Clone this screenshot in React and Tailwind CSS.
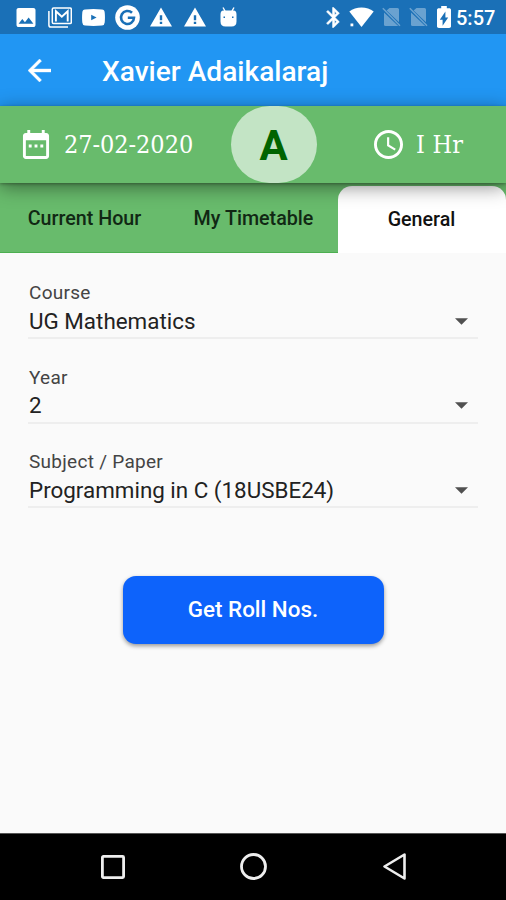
import React from 'react';

const tabs = ['Current Hour', 'My Timetable', 'General'];

const fields = [
  { label: 'Course', value: 'UG Mathematics' },
  { label: 'Year', value: '2' },
  { label: 'Subject / Paper', value: 'Programming in C (18USBE24)' },
];

const WarningIcon = ({ className }) => (
  <svg viewBox="1 2 22 19" fill="currentColor" className={className}>
    <path d="M1 21h22L12 2 1 21zm12.200-2.500h-2.400v-2.300h2.400v2.300zm0-3.800h-2.400v-5h2.400v5z" />
  </svg>
);

const NoSimIcon = ({ className }) => (
  <svg viewBox="0 0 19 20" fill="currentColor" className={className}>
    <path d="M7.500 1H15.500Q17 1 17 2.500V15.200L4.600 3.500Z" />
    <path d="M2 5.600 16.200 19H3.500Q2 19 2 17.500Z" />
    <path d="M.8 1.200 18 18.800" stroke="currentColor" strokeWidth="1.500" />
  </svg>
);

const StatusBar = () => (
  <div className="flex h-[34px] shrink-0 items-center justify-between bg-[#1a70b7] pl-4 pr-[11px] text-white">
    <div className="flex items-center">
      {/* Picture */}
      <svg viewBox="3 3 18 18" fill="currentColor" className="h-[19px] w-5">
        <path d="M21 19V5c0-1.100-.9-2-2-2H5c-1.100 0-2 .9-2 2v14c0 1.100.9 2 2 2h14c1.100 0 2-.9 2-2zM8.500 13.500l2.500 3.010L14.500 12l4.500 6H5l3.500-4.500z" />
      </svg>
      {/* Mail stack */}
      <svg viewBox="0 0 24 21" className="ml-3 h-[21px] w-6" fill="none" stroke="currentColor">
        <path d="M.9 4V18Q.9 20.100 3 20.100H20" strokeWidth="1.500" />
        <rect x="4.300" y="1" width="19" height="15.600" rx="1.300" strokeWidth="1.500" />
        <path d="M7.900 14.500V4.200L13.800 9.600L19.700 4.200V14.500" strokeWidth="1.900" />
      </svg>
      {/* Video */}
      <svg viewBox="0 0 23 17" fill="currentColor" className="ml-2.5 h-[17px] w-[23px]">
        <path fillRule="evenodd" d="M3 .5Q11.500-.3 20 .5Q22.500.7 22.700 3.500Q23.200 8.500 22.700 13.500Q22.500 16.300 20 16.500Q11.500 17.300 3 16.500Q.5 16.300.3 13.500Q-.2 8.500.3 3.500Q.5.7 3 .5ZM9.200 5.700V11.300L14.600 8.500Z" />
      </svg>
      {/* Search */}
      <svg viewBox="0 0 25 25" className="ml-2.5 size-[25px]" fill="none">
        <circle cx="12.500" cy="12.500" r="12.300" fill="currentColor" />
        <path d="M17 7.800A6.500 6.500 0 1 0 19 12.700H12.800" stroke="#1a70b7" strokeWidth="2.600" />
      </svg>
      <WarningIcon className="ml-[10px] h-5 w-[22px]" />
      <WarningIcon className="ml-3 h-5 w-[22px]" />
      {/* Robot head */}
      <svg viewBox="0 0 17 20" fill="currentColor" className="ml-[14px] h-5 w-[17px]">
        <path d="M3 .5 5 4M14 .5 12 4" stroke="currentColor" strokeWidth="1.400" />
        <path fillRule="evenodd" d="M.5 7.500Q.5 3.500 3.500 3.500H13.500Q16.500 3.500 16.500 7.500V14.500Q16.500 19.500 11.500 19.500H5.500Q.5 19.500.5 14.500ZM3.500 9.400V10.900H5V9.400ZM12 9.400V10.900H13.500V9.400Z" />
      </svg>
    </div>

    <div className="flex items-center">
      {/* Bluetooth */}
      <svg viewBox="4.600 1.600 13.600 20.800" fill="currentColor" stroke="currentColor" strokeWidth=".6" className="h-[21px] w-[14px]">
        <path d="M17.710 7.710 12 2h-1v7.590L6.410 5 5 6.410 10.590 12 5 17.590 6.410 19 11 14.410V22h1l5.710-5.710-4.300-4.290 4.300-4.290zM13 5.830l1.880 1.880L13 9.590V5.830zm1.880 10.460L13 18.170v-3.760l1.880 1.880z" />
      </svg>
      {/* Wifi */}
      <svg viewBox="0 0 25 20" fill="currentColor" className="ml-[9px] h-5 w-[25px]">
        <path d="M12.500 20 .3 4.600Q5.500.4 12.500.4T24.700 4.600Z" />
        <path d="M1.500 16.500H4.300V19.300H1.500Z" />
      </svg>
      <NoSimIcon className="ml-[8px] h-5 w-[19px] opacity-35" />
      <NoSimIcon className="ml-2 h-5 w-[19px] opacity-35" />
      {/* Battery */}
      <svg viewBox="7 2 10 20" preserveAspectRatio="none" fill="currentColor" className="ml-[9px] h-[22px] w-[14px]">
        <path d="M15.670 4H14V2h-4v2H8.330C7.600 4 7 4.600 7 5.330v15.330C7 21.400 7.600 22 8.330 22h7.330c.74 0 1.340-.6 1.340-1.330V5.330C17 4.600 16.400 4 15.670 4zM11 20v-5.500H9L13 7v5.500h2L11 20z" />
      </svg>
      <span className="ml-[5px] w-[39px] whitespace-nowrap pt-0.5 text-[20px] font-medium leading-none">5:57</span>
    </div>
  </div>
);

const AppBar = () => (
  <div className="flex h-[72px] shrink-0 items-center bg-[#2196f3] text-white">
    <svg viewBox="4 4 16 16" fill="currentColor" stroke="currentColor" strokeWidth=".3" className="ml-[28px] size-[23px]">
      <path d="M20 11H7.830l5.590-5.590L12 4l-8 8 8 8 1.410-1.410L7.830 13H20v-2z" />
    </svg>
    <h1 className="ml-[51px] whitespace-nowrap pt-1 text-[28.100px] font-medium leading-none">Xavier Adaikalaraj</h1>
  </div>
);

const InfoBar = () => (
  <div className="relative z-10 flex h-[77px] shrink-0 items-center bg-[#68bb6c] font-['DejaVu_Serif_Condensed','Noto_Serif','DejaVu_Serif',serif] text-white shadow-[0_4px_18px_rgba(0,0,0,0.45),0_1px_3px_rgba(0,0,0,0.3)]">
    <svg viewBox="3 1 18 20" fill="currentColor" className="ml-[22px] h-[29px] w-[28px]">
      <path d="M9 11H7v2h2v-2zm4 0h-2v2h2v-2zm4 0h-2v2h2v-2zm2-8h-1V1h-2v2H8V1H6v2H5c-1.110 0-1.990.9-1.990 2L3 19c0 1.100.89 2 2 2h14c1.100 0 2-.9 2-2V5c0-1.100-.9-2-2-2zm0 16H5V8h14v11z" />
    </svg>
    <span className="ml-[14px] w-[129px] whitespace-nowrap text-[25px] leading-none tracking-[-0.050px]">27-02-2020</span>
    <div className="ml-[38px] flex h-[77px] w-[86px] items-center justify-center rounded-[38.500px] bg-[#c3e4c5] pr-[1px] pt-[2px] font-[Roboto,sans-serif] text-[42px] font-bold leading-none text-[#006400]">
      A
    </div>
    <svg viewBox="2 2 20 20" fill="currentColor" className="ml-[57px] size-[29px]">
      <path d="M11.990 2C6.470 2 2 6.480 2 12s4.470 10 9.990 10C17.520 22 22 17.520 22 12S17.520 2 11.990 2zM12 20c-4.420 0-8-3.580-8-8s3.580-8 8-8 8 3.580 8 8-3.580 8-8 8zm.5-13H11v6l5.250 3.150.75-1.230-4.500-2.670z" />
    </svg>
    <span className="ml-[13px] whitespace-nowrap text-[25px] leading-none tracking-[0.200px]">I Hr</span>
  </div>
);

const TabBar = () => (
  <div className="flex h-[70px] shrink-0 border-b border-[#4caf50] bg-[#68bb6c]">
    {tabs.map((tab) => (
      <button
        key={tab}
        className={
          tab === 'General'
            ? 'mt-[3px] -mb-px w-[168px] rounded-t-[14px] bg-white pr-px text-[19.700px] font-medium text-[#111]'
            : 'w-[169px] pt-[3px] text-[19.700px] font-medium text-[#112814]'
        }
      >
        {tab}
      </button>
    ))}
  </div>
);

const SelectField = ({ label, value }) => (
  <div className="h-[84.500px]">
    <div className="h-[26px] pl-px text-[19px] leading-[26px] tracking-[0.280px] text-[#444]">{label}</div>
    <div className="flex h-[33px] items-center justify-between border-b-2 border-[#eeeeee] pb-px pl-px pr-2.5">
      <span className="whitespace-nowrap text-[22.400px] leading-none text-[#222]">{value}</span>
      <svg viewBox="0 0 14 7" fill="#505050" className="h-[7px] w-[13px]">
        <path d="M0 0H14L7 7Z" />
      </svg>
    </div>
  </div>
);

const NavBar = () => (
  <div className="flex h-[67px] shrink-0 items-center border-t border-[#555] bg-black text-[#eee]">
    <svg viewBox="0 0 26 26" className="ml-[100px] size-[26px]" fill="none" stroke="currentColor" strokeWidth="2.800">
      <rect x="2.400" y="2.400" width="21.200" height="21.200" rx="1" />
    </svg>
    <svg viewBox="0 0 28 28" className="ml-[114px] size-7" fill="none" stroke="currentColor" strokeWidth="2.800">
      <circle cx="13.500" cy="13.500" r="12" />
    </svg>
    <svg viewBox="0 0 26 28" className="ml-[114px] h-7 w-[26px]" fill="none" stroke="currentColor" strokeWidth="2.600" strokeLinejoin="round">
      <path d="M22.500 1.500V25.500L2.500 13.500Z" />
    </svg>
  </div>
);

export default function App() {
  return (
    <div className="flex h-[900px] w-[506px] flex-col overflow-hidden bg-[#fafafa] font-[Roboto,sans-serif]">
      <StatusBar />
      <AppBar />
      <InfoBar />
      <TabBar />
      <div className="flex flex-1 flex-col px-7 pt-[27px]">
        {fields.map((field) => (
          <SelectField key={field.label} {...field} />
        ))}
        <button className="ml-[95px] mt-[42px] h-[68px] w-[261px] rounded-[13px] bg-[#0d63fb] pr-px pt-px text-[22.400px] font-medium text-white shadow-[0_2px_4px_rgba(0,0,0,0.4)]">
          Get Roll Nos.
        </button>
      </div>
      <NavBar />
    </div>
  );
}
